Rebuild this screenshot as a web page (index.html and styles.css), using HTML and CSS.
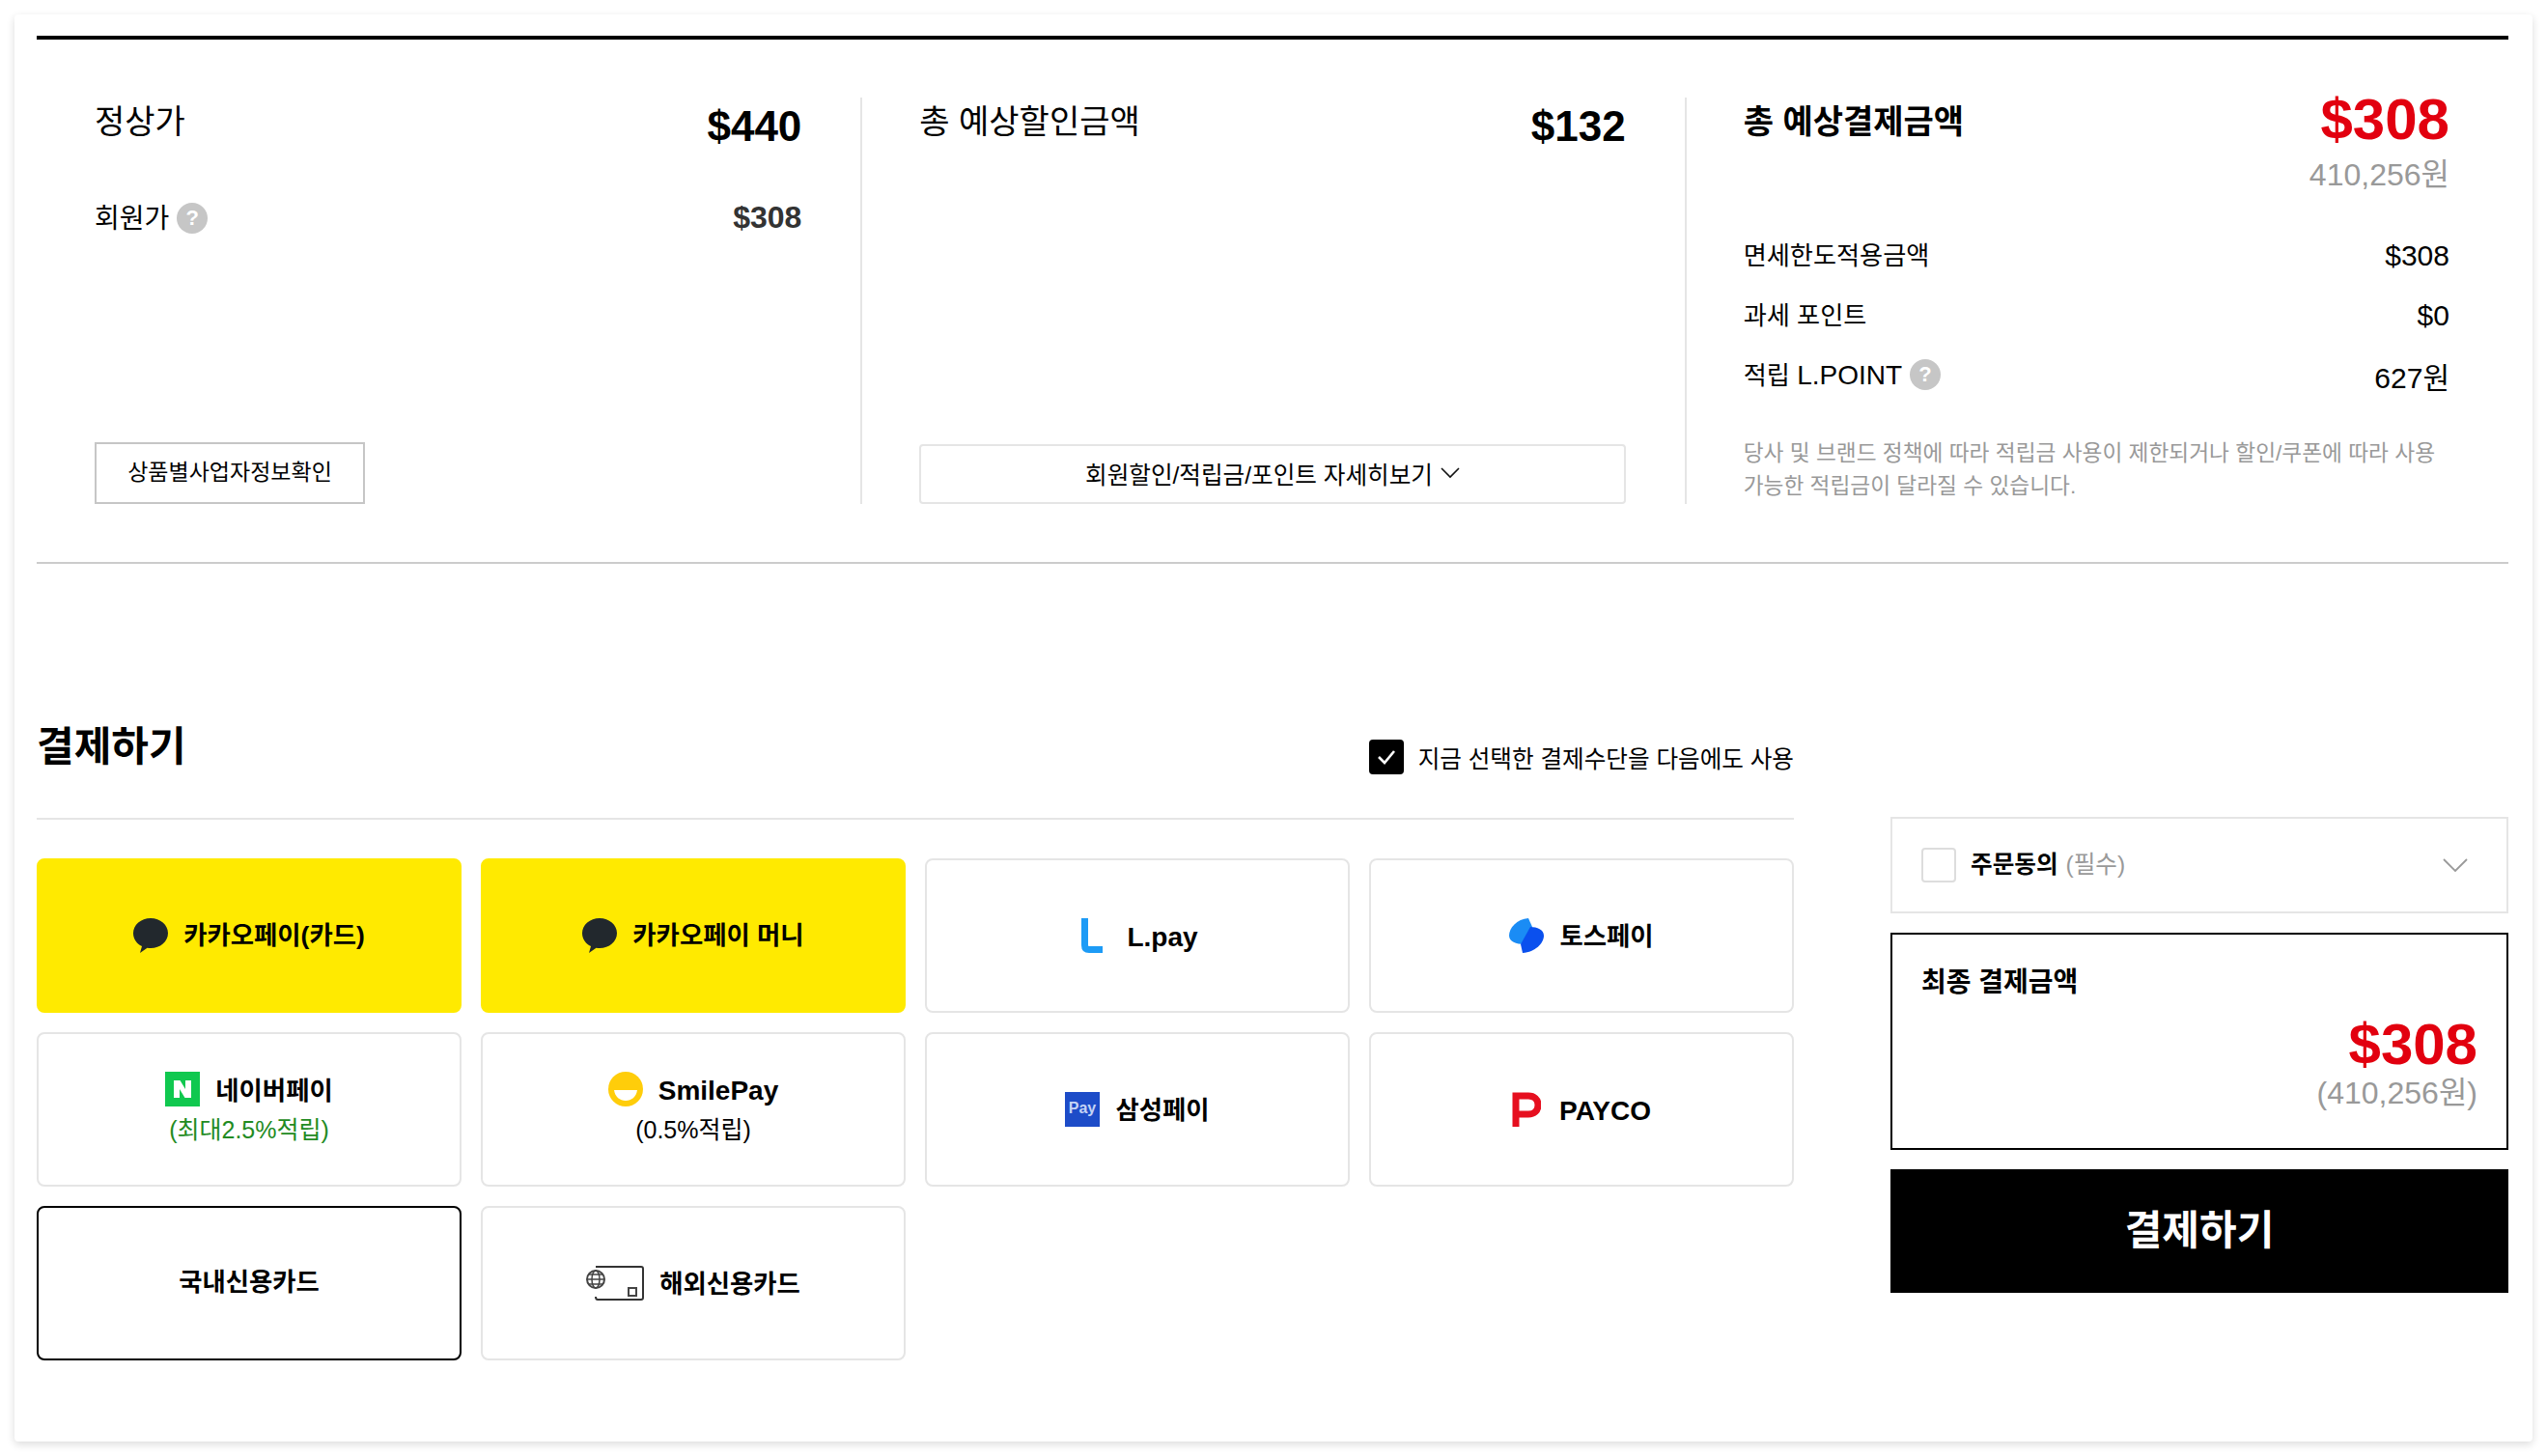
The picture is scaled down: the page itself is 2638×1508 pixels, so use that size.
FILE: index.html
```html
<!DOCTYPE html>
<html lang="ko">
<head>
    <meta charset="UTF-8">
    <meta name="viewport" content="width=device-width, initial-scale=1.0">
    <title>결제하기</title>
    <link rel="stylesheet" href="styles.css">
</head>
<body>
    <div class="card">
        <div class="summary">
            <div class="col">
                <div class="row row-main">
                    <span class="main-label">정상가</span>
                    <strong class="main-value">$440</strong>
                </div>
                <div class="row row-member">
                    <span class="member-label"><span>회원가</span> <span class="help">?</span></span>
                    <strong class="member-value">$308</strong>
                </div>
                <a href="#" class="btn-seller">상품별사업자정보확인</a>
            </div>

            <div class="col">
                <div class="row row-main">
                    <span class="main-label">총 예상할인금액</span>
                    <strong class="main-value">$132</strong>
                </div>
                <a href="#" class="btn-detail"><span>회원할인/적립금/포인트 자세히보기</span>
                    <svg class="chevron-small" viewBox="0 0 20 12"><path d="M1 1l9 9 9-9" fill="none" stroke="#111" stroke-width="1.6"/></svg>
                </a>
            </div>

            <div class="col">
                <div class="row row-total">
                    <strong class="total-label">총 예상결제금액</strong>
                    <div class="total-value">
                        <strong class="price-red">$308</strong>
                        <span class="won">410,256원</span>
                    </div>
                </div>
                <div class="row row-info row-first">
                    <span class="info-label">면세한도적용금액</span>
                    <span class="info-value">$308</span>
                </div>
                <div class="row row-info">
                    <span class="info-label">과세 포인트</span>
                    <span class="info-value">$0</span>
                </div>
                <div class="row row-info">
                    <span class="info-label"><span>적립 <span class="lpoint">L.POINT</span></span> <span class="help">?</span></span>
                    <span class="info-value">627원</span>
                </div>
                <p class="note">당사 및 브랜드 정책에 따라 적립금 사용이 제한되거나 할인/쿠폰에 따라 사용 가능한 적립금이 달라질 수 있습니다.</p>
            </div>
        </div>

        <div class="pay">
            <div class="pay-left">
                <div class="pay-head">
                    <h2>결제하기</h2>
                    <label class="remember">
                        <span class="check-on">
                            <svg viewBox="0 0 36 36"><path d="M10 18l6 6 10-12" fill="none" stroke="#fff" stroke-width="2.6"/></svg>
                        </span>
                        지금 선택한 결제수단을 다음에도 사용
                    </label>
                </div>

                <div class="methods">
                    <div class="tile tile-kakao">
                        <div class="tile-line">
                            <svg class="icon" viewBox="0 0 36 36"><path d="M18 0C8 0 0 7 0 15.500c0 6 3.600 11 9 13.500l-2 7 7.500-5.200c1.200.2 2.300.3 3.500.3 10 0 18-7 18-15.600S28 0 18 0z" fill="#22282d"/></svg>
                            <span>카카오페이(카드)</span>
                        </div>
                    </div>
                    <div class="tile tile-kakao">
                        <div class="tile-line">
                            <svg class="icon" viewBox="0 0 36 36"><path d="M18 0C8 0 0 7 0 15.500c0 6 3.600 11 9 13.500l-2 7 7.500-5.200c1.200.2 2.300.3 3.500.3 10 0 18-7 18-15.600S28 0 18 0z" fill="#22282d"/></svg>
                            <span>카카오페이 머니</span>
                        </div>
                    </div>
                    <div class="tile">
                        <div class="tile-line">
                            <svg class="icon" viewBox="0 0 36 36"><path d="M8.500 0v28c0 3 1.500 4.500 4.500 4.500h14" fill="none" stroke="#1d9bf6" stroke-width="7"/></svg>
                            <span class="latin">L.pay</span>
                        </div>
                    </div>
                    <div class="tile">
                        <div class="tile-line">
                            <svg class="icon" viewBox="0 0 36 36">
                                <path d="M20 0C8 1 0 10 0 18c0 6 7 9 16 9l8-18z" fill="#1a8cf5"/>
                                <path d="M14 36c13-1 22-10 22-18 0-6-7-9-14-9L12 27z" fill="#0a50ee"/>
                            </svg>
                            <span>토스페이</span>
                        </div>
                    </div>

                    <div class="tile">
                        <div class="tile-line">
                            <svg class="icon" viewBox="0 0 36 36">
                                <rect width="36" height="36" fill="#10c84f"/>
                                <path d="M9 9h6.500l5.500 9V9h6v18h-6.500L15 18v9H9z" fill="#fff"/>
                            </svg>
                            <span class="name-naver">네이버페이</span>
                        </div>
                        <div class="tile-sub tile-sub-green">(최대2.5%적립)</div>
                    </div>
                    <div class="tile">
                        <div class="tile-line">
                            <svg class="icon" viewBox="0 0 36 36">
                                <circle cx="18" cy="18" r="18" fill="#ffcd0a"/>
                                <path d="M6 19h24c-1 7-6 11-12 11S7 26 6 19z" fill="#fff"/>
                            </svg>
                            <span class="latin">SmilePay</span>
                        </div>
                        <div class="tile-sub">(0.5%적립)</div>
                    </div>
                    <div class="tile">
                        <div class="tile-line">
                            <svg class="icon" viewBox="0 0 36 36">
                                <rect width="36" height="36" fill="#1d4cc8"/>
                                <text x="18" y="22" class="samsung-pay">Pay</text>
                            </svg>
                            <span>삼성페이</span>
                        </div>
                    </div>
                    <div class="tile">
                        <div class="tile-line tile-line-payco">
                            <svg class="icon icon-payco" viewBox="0 0 30 36"><path d="M4 36V4h13c6 0 10 3.500 10 9.500S23 23 17 23H4" fill="none" stroke="#e60f1f" stroke-width="7"/></svg>
                            <span class="latin">PAYCO</span>
                        </div>
                    </div>

                    <div class="tile tile-selected">
                        <div class="tile-line">
                            <span>국내신용카드</span>
                        </div>
                    </div>
                    <div class="tile">
                        <div class="tile-line">
                            <svg class="icon icon-card" viewBox="0 0 60 36">
                                <path d="M10 1h47c1 0 2 1 2 2v30c0 1-1 2-2 2H12c-1 0-2-1-2-3" fill="none" stroke="#333" stroke-width="2"/>
                                <rect x="44" y="23" width="8" height="8" fill="none" stroke="#444" stroke-width="2"/>
                                <circle cx="10" cy="14" r="10" fill="#fff"/>
                                <circle cx="10" cy="14" r="9" fill="none" stroke="#444" stroke-width="2"/>
                                <ellipse cx="10" cy="14" rx="4" ry="9" fill="none" stroke="#444" stroke-width="1.500"/>
                                <path d="M1 14h18M2 9h16M2 19h16" stroke="#444" stroke-width="1.500"/>
                            </svg>
                            <span>해외신용카드</span>
                        </div>
                    </div>
                </div>
            </div>

            <div class="pay-right">
                <div class="agree">
                    <span class="check-off"></span>
                    <strong>주문동의</strong>
                    <span class="agree-need">(필수)</span>
                    <svg class="chevron" viewBox="0 0 26 14"><path d="M1 1l12 12L25 1" fill="none" stroke="#999" stroke-width="1.800"/></svg>
                </div>
                <div class="final">
                    <strong class="final-title">최종 결제금액</strong>
                    <strong class="price-red final-price">$308</strong>
                    <span class="won final-won">(410,256원)</span>
                </div>
                <button type="button" class="btn-pay"><span>결제하기</span></button>
            </div>
        </div>
    </div>
</body>
</html>
```

FILE: styles.css
```css
body {
    margin: 0;
    padding: 15px;
    background: #fff;
    color: #000;
    font-family: "Liberation Sans", "Noto Sans CJK KR", sans-serif;
}

.card {
    box-sizing: border-box;
    height: 1478px;
    padding: 22px 25px 0 23px;
    background: #fff;
    border-radius: 4px;
    box-shadow: 0 3px 8px rgba(0, 0, 0, 0.14);
}

.summary {
    display: grid;
    grid-template-columns: repeat(3, 1fr);
    padding: 60px 0;
    border-top: 4px solid #000;
    border-bottom: 2px solid #ccc;
}

.col {
    box-sizing: border-box;
    display: flex;
    flex-direction: column;
    height: 421px;
    padding: 0 61px 0 59px;
    border-left: 2px solid #e5e5e5;
}

.col:first-child {
    padding-left: 58px;
    border-left: 2px solid transparent;
}

.row {
    display: flex;
    justify-content: space-between;
}

.row-main {
    align-items: flex-start;
    height: 50px;
}

.main-label {
    font-size: 34px;
    line-height: 50px;
}

.main-value {
    margin-top: 5px;
    font-size: 44px;
    line-height: 50px;
}

.row-member {
    margin-top: 49px;
    align-items: center;
    height: 50px;
}

.member-label {
    display: flex;
    align-items: center;
    gap: 8px;
    font-size: 28px;
}

.member-label > span:first-child {
    margin-top: -3px;
}

.member-value {
    color: #333;
    font-size: 32px;
}

.help {
    display: inline-block;
    width: 32px;
    height: 32px;
    margin-top: 2px;
    border-radius: 50%;
    background: #c6c6c6;
    color: #fff;
    font-size: 22px;
    font-weight: bold;
    line-height: 32px;
    text-align: center;
}

.btn-seller {
    box-sizing: border-box;
    display: block;
    width: 280px;
    height: 64px;
    margin-top: auto;
    border: 2px solid #c6c6c6;
    color: #000;
    font-size: 23px;
    line-height: 58px;
    text-align: center;
    text-decoration: none;
}

.btn-detail {
    box-sizing: border-box;
    display: flex;
    align-items: center;
    justify-content: center;
    gap: 8px;
    height: 62px;
    margin-top: auto;
    padding-bottom: 3px;
    border: 2px solid #e5e5e5;
    border-radius: 4px;
    color: #000;
    font-size: 24.6px;
    text-decoration: none;
}

.chevron-small {
    width: 20px;
    height: 12px;
}

.row-total {
    height: 126px;
}

.total-label {
    font-size: 34px;
    line-height: 50px;
}

.total-value {
    display: flex;
    flex-direction: column;
    align-items: flex-end;
}

.price-red {
    color: #e2000f;
    font-size: 60px;
    line-height: 46px;
}

.won {
    color: #999;
    font-size: 32px;
}

.row-total .won {
    margin-top: 14px;
    line-height: 40px;
}

.row-info {
    align-items: center;
    height: 62px;
}

.info-label {
    display: flex;
    align-items: center;
    gap: 8px;
    margin-top: -3px;
    font-size: 26.2px;
}

.lpoint {
    font-size: 28px;
}

.info-value {
    margin-top: 2px;
    font-size: 30px;
}

.row-first {
    margin-top: 6px;
}

.note {
    margin: 33px 0 0;
    color: #999;
    font-size: 22.7px;
    line-height: 34px;
}

.pay {
    display: grid;
    grid-template-columns: 1820px 640px;
    gap: 100px;
    margin-top: 140px;
}

.pay-head {
    box-sizing: border-box;
    display: flex;
    align-items: center;
    justify-content: space-between;
    height: 125px;
    padding-bottom: 24px;
    border-bottom: 2px solid #e5e5e5;
}

.pay-head h2 {
    margin: 0;
    font-size: 42px;
    line-height: 60px;
}

.remember {
    display: flex;
    align-items: center;
    gap: 15px;
    margin-top: 21px;
    font-size: 24.6px;
}

.check-on {
    width: 36px;
    height: 36px;
    border-radius: 4px;
    background: #000;
}

.check-on svg {
    display: block;
}

.methods {
    display: grid;
    grid-template-columns: repeat(4, 440px);
    grid-auto-rows: 160px;
    gap: 20px;
    margin-top: 40px;
}

.tile {
    box-sizing: border-box;
    display: flex;
    flex-direction: column;
    align-items: center;
    justify-content: center;
    border: 2px solid #e5e5e5;
    border-radius: 8px;
    font-size: 26.4px;
    font-weight: bold;
}

.tile-kakao {
    border-color: #ffea00;
    background: #ffea00;
}

.tile-selected {
    border-color: #000;
}

.tile-line {
    display: flex;
    align-items: center;
    gap: 16px;
    height: 36px;
}

.tile-line-payco {
    gap: 19px;
}

.tile-line span {
    margin-top: -3px;
}

.tile-kakao .tile-line span {
    margin-top: -6px;
}

.tile-selected .tile-line span {
    margin-top: -7px;
}

.tile-line .name-naver {
    margin-top: -1px;
}

.icon {
    display: block;
    flex: none;
    width: 36px;
    height: 36px;
}

.icon-payco {
    width: 30px;
}

.icon-card {
    width: 60px;
}

.tile-line .latin {
    margin-top: 4px;
    font-size: 28px;
}

.samsung-pay {
    fill: #c5d3f5;
    font-size: 16px;
    font-weight: bold;
    text-anchor: middle;
}

.tile-sub {
    margin-top: 6px;
    font-size: 25px;
    font-weight: normal;
    line-height: 36px;
}

.tile-sub-green {
    color: #228b22;
}

.pay-right {
    display: flex;
    flex-direction: column;
    padding-top: 122px;
}

.agree {
    box-sizing: border-box;
    display: flex;
    align-items: center;
    height: 100px;
    padding: 0 30px;
    border: 2px solid #e5e5e5;
    font-size: 24.6px;
}

.agree strong,
.agree-need {
    margin-top: -7px;
}

.check-off {
    box-sizing: border-box;
    width: 36px;
    height: 36px;
    margin-right: 15px;
    border: 2px solid #ddd;
    border-radius: 4px;
}

.agree-need {
    margin-left: 8px;
    color: #999;
}

.chevron {
    width: 26px;
    height: 14px;
    margin-left: auto;
    margin-right: 10px;
}

.final {
    box-sizing: border-box;
    display: flex;
    flex-direction: column;
    height: 225px;
    margin-top: 20px;
    padding: 30px 30px 0 30px;
    border: 2px solid #000;
}

.final-title {
    font-size: 28px;
    line-height: 40px;
}

.final-price {
    align-self: flex-end;
    margin-top: 14px;
    line-height: 60px;
}

.final-won {
    align-self: flex-end;
    margin-top: -2px;
    line-height: 44px;
}

.btn-pay {
    height: 128px;
    margin-top: 20px;
    padding: 0 0 10px;
    border: none;
    background: #000;
    color: #fff;
    font-family: inherit;
    font-size: 42px;
    font-weight: bold;
}
```
